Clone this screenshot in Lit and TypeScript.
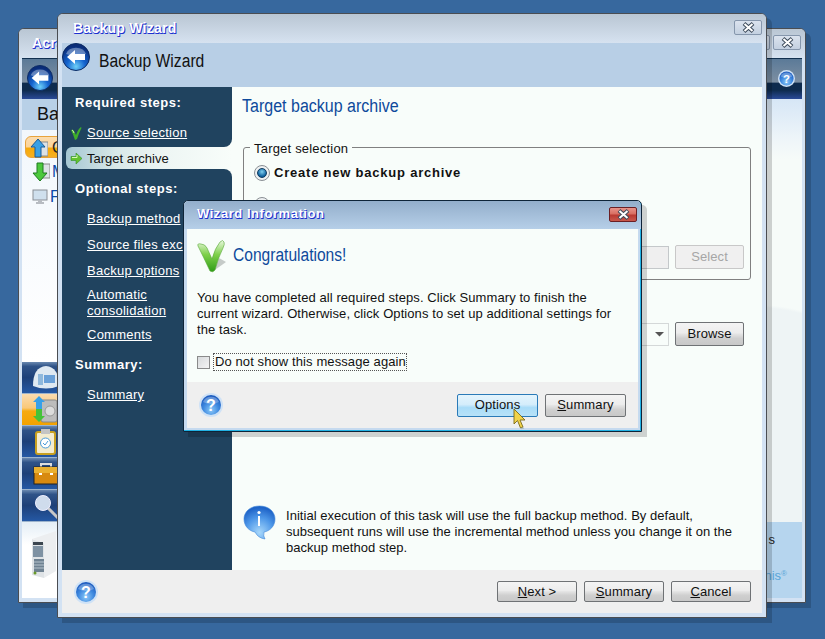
import { LitElement, html, css, svg } from "lit";
import { customElement } from "lit/decorators.js";

const helpIcon = (size = 22) => html`<svg class="ico" width=${size} height=${size} viewBox="0 0 24 24">
  <defs><radialGradient id="hb" cx="50%" cy="75%" r="70%"><stop offset="0" stop-color="#8cc8f8"/><stop offset=".55" stop-color="#3f8ae0"/><stop offset="1" stop-color="#1d5cc0"/></radialGradient></defs>
  <circle cx="12" cy="12" r="12" fill="#cfe2f6"/><circle cx="12" cy="12" r="10" fill="url(#hb)"/>
  <path d="M4 9 A8.5 8 0 0 1 20 9 Q12 13 4 9Z" fill="#fff" opacity=".28"/>
  <text x="12" y="18" font-family="Liberation Sans" font-weight="700" font-size="16" text-anchor="middle" fill="#fff">?</text>
</svg>`;

const backIcon = (size = 28) => html`<svg class="ico" width=${size} height=${size} viewBox="0 0 28 28">
  <defs><radialGradient id="bb" cx="50%" cy="85%" r="75%"><stop offset="0" stop-color="#6ed0f8"/><stop offset=".45" stop-color="#1565d0"/><stop offset="1" stop-color="#0a2c78"/></radialGradient></defs>
  <circle cx="14" cy="14" r="13.5" fill="url(#bb)" stroke="#0b2a63"/>
  <path d="M4 11 A10.5 9 0 0 1 24 11 Q14 15 4 11Z" fill="#fff" opacity=".35"/>
  <path d="M5 14 L13 7 V11 H23 V17 H13 V21Z" fill="#fff"/>
</svg>`;

const smallCheck = html`<svg class="ico" width="11" height="13" viewBox="0 0 11 13"><path d="M0 3 Q2 2 3 4 L5 8 Q7 2 10 0 Q11 1 10 2 Q8 6 6 12 L4 13 Q2 7 0 3Z" fill="#3fae2a"/><path d="M1 3 Q2 3 3 6" stroke="#c6f0a8" fill="none"/></svg>`;

const smallArrow = html`<svg class="ico" width="13" height="13" viewBox="0 0 13 13"><path d="M1 4.5 H6 V1 L12 6.5 L6 12 V8.5 H1Z" fill="#63c32e" stroke="#2f8f2a" stroke-width=".6"/><path d="M2 5.5H7V3" stroke="#d8f7b8" fill="none"/></svg>`;

const bigCheck = html`<svg class="ico" width="31" height="33" viewBox="0 0 31 33">
  <defs><linearGradient id="vg" x1="0" y1="0" x2="0" y2="1"><stop offset="0" stop-color="#e9f8df"/><stop offset=".45" stop-color="#7ed04a"/><stop offset="1" stop-color="#2f9c18"/></linearGradient></defs>
  <path d="M15 32 L29 22 L22 18Z" fill="#9aa39f" opacity=".55"/>
  <path d="M1 6 Q0 3 4 4 Q8 4 10 8 L15 19 Q18 8 23 2 Q26 -1 27 2 Q28 4 26 8 Q21 18 18 30 Q16 33 13 31 Q6 16 1 6Z" fill="url(#vg)" stroke="#58a838" stroke-width=".6"/>
</svg>`;

const infoBubble = html`<svg class="ico" width="33" height="35" viewBox="0 0 33 35">
  <defs><radialGradient id="ib" cx="50%" cy="80%" r="75%"><stop offset="0" stop-color="#a8d8fb"/><stop offset=".6" stop-color="#4d97e8"/><stop offset="1" stop-color="#1f64c8"/></radialGradient></defs>
  <path d="M16.5 1 C26 1 32 7 32 14 C32 21 27 26 21 27 Q20 31 22 34 Q15 33 12 27 C6 26 1 21 1 14 C1 7 7 1 16.5 1Z" fill="url(#ib)" stroke="#3f86d8" stroke-width=".6"/>
  <circle cx="16" cy="7.5" r="1.6" fill="#fff"/><rect x="15" y="11" width="2" height="10" fill="#fff"/>
</svg>`;

const closeX = html`<svg class="ico" width="13" height="11" viewBox="0 0 13 11"><path d="M2 1.5 L11 9.5 M11 1.5 L2 9.5" stroke="#3c4a5a" stroke-width="4"/><path d="M2.5 2 L10.5 9 M10.5 2 L2.5 9" stroke="#fff" stroke-width="2"/></svg>`;

const cursor = html`<svg width="13" height="22" viewBox="0 0 13 22"><path d="M1 1 V16 L4.5 12.5 L7.5 20 L10 19 L7 12 H12Z" fill="#f2d44a" stroke="#7a6a18" stroke-width=".9"/><path d="M8 20.5 L11 20" stroke="#9aa" stroke-width="1.5" opacity=".6"/></svg>`;

const arrowUp = html`<svg class="ico" width="18" height="20" viewBox="0 0 18 20"><rect x="10" y="4" width="8" height="14" fill="#dde2e6" stroke="#888"/><path d="M8 1 L15 9 H11 V19 H5 V9 H1Z" fill="#3aa0e4" stroke="#1a5a98"/></svg>`;
const arrowDown = html`<svg class="ico" width="18" height="20" viewBox="0 0 18 20"><rect x="10" y="2" width="8" height="14" fill="#dde2e6" stroke="#888"/><path d="M5 1 H11 V11 H15 L8 19 L1 11 H5Z" fill="#4cc83c" stroke="#1e7a20"/></svg>`;
const monitor = html`<svg class="ico" width="16" height="16" viewBox="0 0 16 16"><rect x="1" y="1" width="14" height="10" fill="#cfe0ee" stroke="#8a8f96"/><path d="M6 11h4v2h2v2H4v-2h2z" fill="#b8bcc2"/></svg>`;

const stripIcons = [
  svg`<path d="M1 22 Q1 3 14 2 Q27 3 27 22 Q14 27 1 22Z" fill="#dfe9f2"/><rect x="6" y="10" width="5" height="11" fill="#8fb8dc"/><rect x="12" y="11" width="11" height="8" fill="#6aa0d8"/>`,
  svg`<rect x="9" y="4" width="16" height="22" rx="2" fill="#bcbcbc" stroke="#888"/><circle cx="18" cy="15" r="5" fill="#dcdcdc" stroke="#999"/><path d="M7 0 L13 6 H10 V13 H4 V6 H1Z" fill="#38a0e8"/><path d="M4 13 H10 V20 H13 L7 26 L1 20 H4Z" fill="#46c238"/>`,
  svg`<rect x="4" y="4" width="19" height="22" rx="2" fill="#f4ecd0" stroke="#c8a020" stroke-width="2"/><rect x="9" y="1" width="9" height="5" fill="#c4c4c4"/><circle cx="13.500" cy="15" r="5" fill="#fff" stroke="#4a9ad8"/><path d="M11 15l2 2 3-4" stroke="#4a9ad8" fill="none"/>`,
  svg`<path d="M9 7 V4 H19 V7" fill="none" stroke="#ddd" stroke-width="2"/><rect x="2" y="7" width="24" height="17" fill="#d88a10" stroke="#222"/><rect x="2" y="7" width="24" height="6" fill="#eab030"/><rect x="7" y="13" width="3" height="2" fill="#fff"/><rect x="18" y="13" width="3" height="2" fill="#fff"/>`,
  svg`<path d="M15 15 L26 26" stroke="#c8c8c8" stroke-width="3"/><circle cx="11" cy="11" r="7.500" fill="#cfdcec" stroke="#eef"/>`,
];

const server = html`<svg class="ico" width="26" height="48" viewBox="0 0 26 48">
  <path d="M0 8 L12 12 V47 L0 44Z" fill="#dfe3e6"/><path d="M0 8 L24 0 V40 L12 47 V12Z" fill="#eceef0"/>
  <rect x="1" y="11" width="10" height="3" fill="#3c4650"/><rect x="1" y="15" width="10" height="11" fill="#7f92a3"/>
  <rect x="2" y="28" width="10" height="13" fill="#6f8292"/><path d="M2 31h10M2 34h10M2 37h10" stroke="#b8c4ce"/><circle cx="3" cy="42" r="1.500" fill="#6a9a2a"/></svg>`;

@customElement("app-root")
export class AppRoot extends LitElement {
  static styles = css`
    :host { display: block; width: 825px; height: 639px; overflow: hidden; background: #37689e;
      font: 13px/16px "Liberation Sans", Arial, sans-serif; color: #111; }
    .desktop { position: relative; width: 825px; height: 639px; }
    .ico { display: block; flex: none; }
    .win { position: absolute; box-sizing: border-box; display: flex; flex-direction: column;
      border: 1px solid #4a4d52; border-radius: 6px 6px 0 0; background: #d3e2f3;
      box-shadow: 5px 5px 0 rgba(0,0,0,.17); }
    .tbar { flex: none; display: flex; align-items: center; box-sizing: border-box; height: 29px; padding-bottom: 2px;
      background: linear-gradient(#b9c6d3, #d6e2f0); border-radius: 5px 5px 0 0;
      font-weight: 700; font-size: 14px; letter-spacing: .25px; color: #fff; text-shadow: 1px 1px 0 #1c2fd0, 0 1px 0 #3a4fd8; }

    .back { left: 18px; top: 28px; width: 788px; height: 575px; padding: 0 3px 4px; }
    .back .tbar { margin: 0 -3px; padding-left: 13px; padding-right: 4px; }
    .back .tbar .ctrls { margin-left: auto; display: flex; gap: 3px; }
    .bhead { flex: none; height: 41px; box-sizing: border-box; display: flex; align-items: center; justify-content: space-between;
      padding: 0 7px 2px 5px; border-top: 1px solid #12304f;
      background: linear-gradient(#5b7a98 0, #7d8fa2 58%, #0e2b4e 60%, #0e2b4e 78%, #2a4a98 100%); }
    .bmain { flex: 1; min-height: 0; display: flex; }
    .bleft { width: 200px; display: flex; flex-direction: column; background: #fff; }
    .bright { flex: 1; display: flex; flex-direction: column;
      background: radial-gradient(circle 155px at 538px 361px, #eef4f5 98%, transparent 100%), linear-gradient(#d6e6f6 0, #eef5f9 40px, #f6fbf9 60px); }
    .bsub { flex: none; height: 31px; background: #b8d0e7; font-size: 18px; line-height: 31px; padding-left: 15px; color: #111; }
    .blist { flex: 1; padding: 6px 3px 0; display: flex; flex-direction: column; background: linear-gradient(#f2f7fc, #fff); }
    .bitem { flex: none; height: 22px; display: flex; align-items: center; gap: 2px; padding-left: 7px; color: #0b49a8; font-size: 16px; margin-bottom: 3px; }
    .bitem.sel { background: linear-gradient(#fbdcae 0, #fbd49a 50%, #f6a908 55%, #f7b020 100%); border: 1px solid #e8a33c; border-radius: 6px 0 0 6px; color: #222; box-sizing: border-box; }
    .strip { flex: none; height: 32px; box-sizing: border-box; padding: 2px 0 0 10px;
      background: linear-gradient(#6a89b0 0, #2f5388 14%, #1d4078 50%, #2558a4 100%); border-bottom: 1px solid #9cb3cc; }
    .strip.on { background: linear-gradient(#fbdcb0 0, #f9c878 45%, #f6aa10 55%, #f3a200 100%); }
    .bfoot { flex: none; height: 76px; box-sizing: border-box; padding: 9px 0 0 10px; background: linear-gradient(#e4eef6, #fff 30%); }
    .tips { flex: none; height: 76px; box-sizing: border-box; background: #b6d5ee; padding-top: 10px; display: flex; flex-direction: column; align-items: flex-end; padding-right: 15px; color: #222; }
    .tips .s { padding-right: 12px; }
    .tips .brand { margin-top: 20px; color: #5aa5d8; font-size: 13px; }
    .tips .brand small { font-size: 8px; vertical-align: top; line-height: 12px; }
    .spacer { flex: 1; }

    .front { left: 57px; top: 13px; width: 710px; height: 605px; padding: 0 4px 4px; }
    .front .tbar { margin: 0 -4px; padding-left: 15px; padding-right: 4px; justify-content: space-between; }
    .cbtn { width: 28px; height: 15px; box-sizing: border-box; display: flex; align-items: center; justify-content: center;
      border: 1px solid #8596ac; border-radius: 2px; background: linear-gradient(#dbe3ee, #c3d0e0); }
    .cbtn.red { border-color: #6b1f24; background: linear-gradient(#e8938a 0, #d96f62 45%, #b93a32 55%, #c8584c 100%); }
    .fhead { flex: none; height: 44px; display: flex; align-items: flex-start; gap: 9px; background: #b8cfe6; font-size: 18px; color: #111; }
    .narrow { display: inline-block; transform-origin: 0 50%; white-space: nowrap; }
    .fhead .t { line-height: 36px; transform: scaleX(.87); }
    .fmain { flex: 1; min-height: 0; display: flex; background: #f8fdfa; }
    .side { width: 170px; flex: none; display: flex; flex-direction: column; color: #fff; }
    .blk { background: #20435f; padding-left: 13px; display: flex; flex-direction: column; }
    .blk.a { height: 60px; box-sizing: border-box; padding-top: 8px; border-bottom-right-radius: 8px; }
    .blk.b { flex: 1; padding-top: 12px; border-top-right-radius: 8px; }
    .selrow { flex: none; height: 22px; background: #20435f; padding-left: 4px; }
    .sel { height: 22px; box-sizing: border-box; padding: 1px 0 0 4px; display: flex; align-items: center; gap: 4px; color: #111; border-radius: 6px 0 0 6px;
      background: linear-gradient(90deg, #a5c7d3 0, #d8e8e8 30%, #eef6f4 60%, #f8fdfa 100%); }
    .h { font-weight: 700; letter-spacing: .55px; height: 16px; margin-bottom: 14px; white-space: nowrap; }
    .lnk { display: block; color: #fff; text-decoration: underline; margin-left: 12px; margin-bottom: 10px; white-space: nowrap; letter-spacing: .25px; }
    .lnk.chk { display: flex; align-items: center; margin-left: -4px; gap: 5px; margin-bottom: 10px; text-decoration: none; }
    .lnk.chk u { text-decoration: underline; }
    .lnk.tight { margin-top: -2px; margin-bottom: 8px; }
    .grp { margin-top: 4px; }
    .cont { flex: 1; min-width: 0; display: flex; flex-direction: column; padding: 8px 0 14px 11px; }
    .ttl { color: #0e4a9c; font-size: 18px; line-height: 22px; height: 22px; margin-left: -1px; align-self: flex-start; transform: scaleX(.89); }
    fieldset { margin: 20px 11px 0 0; padding: 0 6px 10px 10px; border: 1px solid #808080; border-radius: 3px; min-width: 0; }
    legend { padding: 4px 4px 0; margin-left: -4px; line-height: 16px; letter-spacing: .2px; }
    .rrow { display: flex; align-items: center; gap: 4px; height: 16px; font-weight: 700; letter-spacing: .78px; margin-top: 8px; }
    .rrow.second { margin-top: 16px; }
    .radio { width: 16px; height: 16px; box-sizing: border-box; border-radius: 50%; border: 1px solid #8a8f94; background: #eef1f2; display: flex; align-items: center; justify-content: center; flex: none; }
    .radio i { display: block; width: 8px; height: 8px; border-radius: 50%; background: radial-gradient(circle at 50% 35%, #7fd0f0, #0d5f9c 70%); border: 1px solid #0c3a60; }
    .frow { display: flex; justify-content: flex-end; align-items: center; gap: 6px; margin-top: 32px; }
    .inp { flex: 1; height: 23px; box-sizing: border-box; border: 1px solid #c4c8ca; background: #efefef; }
    .brow { display: flex; align-items: center; gap: 6px; margin: 42px 18px 0 0; }
    .combo { flex: 1; height: 23px; box-sizing: border-box; border: 1px solid #d4d8d8; background: #f8fdfa; display: flex; align-items: center; justify-content: flex-end; padding-right: 3px; }
    .combo svg { display: block; }
    .btn { width: 69px; height: 24px; box-sizing: border-box; display: flex; align-items: center; justify-content: center;
      border: 1px solid #6f7275; border-radius: 2px; color: #111; letter-spacing: .1px;
      background: linear-gradient(#f4f4f4 0, #ececec 45%, #e4e4e4 50%, #cfcfcf 70%, #c8c8c8 100%); }
    .btn.dis { border-color: #c8c8c8; color: #a6a6a6; background: #f0f0f0; }
    .btn.w { width: 80px; height: 21px; }
    .btn.d { width: 81px; height: 23px; }
    .btn.hot { border-color: #2a7ab8; background: linear-gradient(#e4f4fd 0, #d4edfb 45%, #a9dcf8 60%, #b8e2f8 100%); }
    .note { margin-top: auto; display: flex; gap: 10px; align-items: flex-start; }
    .note p { margin: 3px 0 0; letter-spacing: .03px; }
    .ffoot { flex: none; height: 43px; display: flex; align-items: center; justify-content: space-between; padding: 0 11px 0 12px; background: #efefef; }
    .btns { display: flex; gap: 7px; }

    .dlg { position: absolute; box-sizing: border-box; left: 183px; top: 200px; width: 459px; height: 232px; display: flex; flex-direction: column;
      border: 1px solid #0e2438; border-radius: 5px 5px 0 0; padding: 0 3px 3px; background: #c6daef;
      box-shadow: inset -1px -1px 0 #22b2e4, 5px 5px 0 rgba(0,0,0,.17); }
    .dlg .tbar { height: 28px; margin: 0 -3px; padding: 0 4px 2px 13px; justify-content: space-between; font-size: 13px; letter-spacing: .55px;
      background: linear-gradient(#93aecb, #b6cfe8); }
    .dbody { flex: 1; min-height: 0; background: #f8fdfa; padding: 11px 10px 0; display: flex; flex-direction: column; }
    .dhead { display: flex; align-items: center; gap: 5px; height: 32px; }
    .dhead span { color: #0e4a9c; font-size: 18px; padding-bottom: 2px; transform: scaleX(.865); }
    .dtxt { margin: 18px 0 0; letter-spacing: .08px; }
    .chkrow { display: flex; align-items: center; gap: 3px; margin-top: 14px; height: 20px; }
    .cb { width: 13px; height: 13px; box-sizing: border-box; border: 1px solid #8a8a8a; background: linear-gradient(135deg, #d8dadc, #f4f4f4); flex: none; }
    .cl { border: 1px dotted #555; padding: 0 0 0 1px; line-height: 16px; letter-spacing: .1px; }
    .dfoot { flex: none; height: 46px; display: flex; align-items: center; justify-content: space-between; padding: 0 12px; background: #efefef; }
    .cursor { position: absolute; left: 513px; top: 408px; }
    .cursor svg { display: block; }
  `;

  render() {
    return html`<div class="desktop">
      <section class="win back">
        <div class="tbar"><span>Acronis</span>
          <div class="ctrls"><div class="cbtn"></div><div class="cbtn">${closeX}</div></div></div>
        <div class="bhead">${backIcon(26)}${helpIcon(17)}</div>
        <div class="bmain">
          <div class="bleft">
            <div class="bsub">Ba</div>
            <div class="blist">
              <div class="bitem sel">${arrowUp}<span>C</span></div>
              <div class="bitem">${arrowDown}<span>M</span></div>
              <div class="bitem">${monitor}<span>F</span></div>
            </div>
            ${stripIcons.map((p, i) => html`<div class="strip ${i === 1 ? "on" : ""}"><svg class="ico" width="28" height="28" viewBox="0 0 28 28">${p}</svg></div>`)}
            <div class="bfoot">${server}</div>
          </div>
          <div class="bright"><div class="spacer"></div>
            <div class="tips"><span class="s">s</span><span class="brand">onis<small>®</small></span></div>
          </div>
        </div>
      </section>

      <section class="win front">
        <div class="tbar"><span>Backup Wizard</span><div class="cbtn">${closeX}</div></div>
        <div class="fhead">${backIcon(28)}<span class="t narrow">Backup Wizard</span></div>
        <div class="fmain">
          <nav class="side">
            <div class="blk a">
              <div class="h">Required steps:</div>
              <span class="lnk chk">${smallCheck}<u>Source selection</u></span>
            </div>
            <div class="selrow"><div class="sel">${smallArrow}<span>Target archive</span></div></div>
            <div class="blk b">
              <div class="h">Optional steps:</div>
              <a class="lnk">Backup method</a>
              <a class="lnk">Source files exc</a>
              <a class="lnk">Backup options</a>
              <a class="lnk tight">Automatic<br />consolidation</a>
              <a class="lnk">Comments</a>
              <div class="h grp">Summary:</div>
              <a class="lnk">Summary</a>
            </div>
          </nav>
          <div class="cont">
            <div class="ttl narrow">Target backup archive</div>
            <fieldset>
              <legend>Target selection</legend>
              <div class="rrow"><span class="radio"><i></i></span>Create new backup archive</div>
              <div class="rrow second"><span class="radio"></span></div>
              <div class="frow"><div class="inp"></div><div class="btn dis">Select</div></div>
            </fieldset>
            <div class="brow">
              <div class="combo"><svg width="11" height="6" viewBox="0 0 11 6"><path d="M1 1H10L5.500 5.500Z" fill="#555"/></svg></div>
              <div class="btn">Browse</div>
            </div>
            <div class="note">${infoBubble}
              <p>Initial execution of this task will use the full backup method. By default,<br />subsequent runs will use the incremental method unless you change it on the<br />backup method step.</p>
            </div>
          </div>
        </div>
        <div class="ffoot">${helpIcon(24)}
          <div class="btns">
            <div class="btn w"><span><u>N</u>ext &gt;</span></div>
            <div class="btn w"><span><u>S</u>ummary</span></div>
            <div class="btn w"><span><u>C</u>ancel</span></div>
          </div>
        </div>
      </section>

      <section class="dlg">
        <div class="tbar"><span>Wizard Information</span><div class="cbtn red">${closeX}</div></div>
        <div class="dbody">
          <div class="dhead">${bigCheck}<span class="narrow">Congratulations!</span></div>
          <p class="dtxt">You have completed all required steps. Click Summary to finish the<br />current wizard. Otherwise, click Options to set up additional settings for<br />the task.</p>
          <div class="chkrow"><div class="cb"></div><span class="cl">Do not show this message again</span></div>
        </div>
        <div class="dfoot">${helpIcon(24)}
          <div class="btns">
            <div class="btn d hot">Options</div>
            <div class="btn d"><span><u>S</u>ummary</span></div>
          </div>
        </div>
      </section>
      <div class="cursor">${cursor}</div>
    </div>`;
  }
}
